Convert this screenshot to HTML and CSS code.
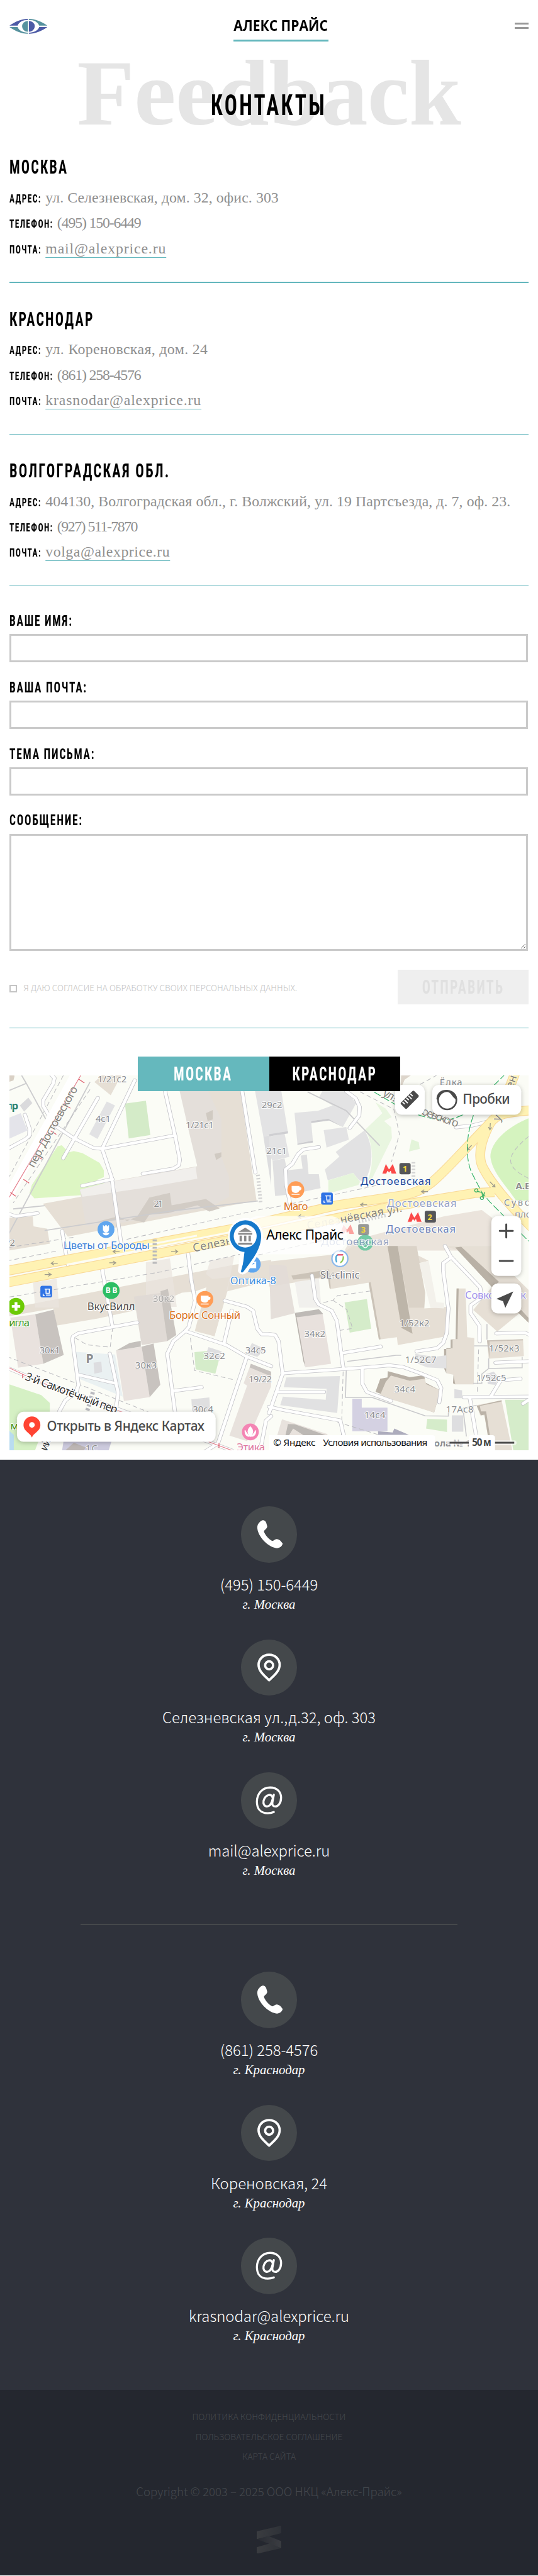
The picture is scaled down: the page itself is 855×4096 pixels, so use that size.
FILE: index.html
```
<!DOCTYPE html>
<html lang="ru">
<head>
<meta charset="utf-8">
<title>Алекс Прайс — Контакты</title>
<link rel="stylesheet" href="styles.css">
</head>
<body>
<header class="header">
  <svg class="header__logo" viewBox="0 0 81 32" aria-label="Алекс Прайс">
    <path d="M0 14.500C12 6 26 0 39.500 0V2.500C29 2.500 20 7 17.500 14.500Z" fill="#4d5ba6"/>
    <path d="M81 14.500C69 6 55 0 41.500 0V2.500C52 2.500 61 7 63.500 14.500Z" fill="#56929e"/>
    <path d="M0 17.500C12 26 26 32 39.500 32V29.500C29 29.500 20 25 17.500 17.500Z" fill="#56929e"/>
    <path d="M81 17.500C69 26 55 32 41.500 32V29.500C52 29.500 61 25 63.500 17.500Z" fill="#4d5ba6"/>
    <path d="M39.500 4.500V27.500A12.500 11.500 0 0 1 39.500 4.500Z" fill="#56929e"/>
    <path d="M41.500 4.500V27.500A12.500 11.500 0 0 0 41.500 4.500Z" fill="#4d5ba6"/>
  </svg>
  <a class="header__title"><span class="header__name">АЛЕКС ПРАЙС</span></a>
  <div class="header__menu"><i></i><i></i></div>
</header>

<main class="page">
  <div class="hero">
    <div class="hero__back">Feedback</div>
    <h1 class="hero__title"><span class="narrow">КОНТАКТЫ</span></h1>
  </div>

  <section class="office">
    <h2 class="office__city"><span class="narrow">МОСКВА</span></h2>
    <div class="row"><span class="row__label"><span class="narrow">АДРЕС:</span></span><span class="row__value">ул. Селезневская, дом. 32, офис. 303</span></div>
    <div class="row"><span class="row__label row__label--phone"><span class="narrow">ТЕЛЕФОН:</span></span><span class="row__value row__value--phone">(495) 150-6449</span></div>
    <div class="row"><span class="row__label"><span class="narrow">ПОЧТА:</span></span><a class="row__value row__value--mail">mail@alexprice.ru</a></div>
  </section>
  <section class="office">
    <h2 class="office__city"><span class="narrow">КРАСНОДАР</span></h2>
    <div class="row"><span class="row__label"><span class="narrow">АДРЕС:</span></span><span class="row__value row__value--short">ул. Кореновская, дом. 24</span></div>
    <div class="row"><span class="row__label row__label--phone"><span class="narrow">ТЕЛЕФОН:</span></span><span class="row__value row__value--phone">(861) 258-4576</span></div>
    <div class="row"><span class="row__label"><span class="narrow">ПОЧТА:</span></span><a class="row__value row__value--mail">krasnodar@alexprice.ru</a></div>
  </section>
  <section class="office">
    <h2 class="office__city"><span class="narrow narrow--long">ВОЛГОГРАДСКАЯ ОБЛ.</span></h2>
    <div class="row"><span class="row__label"><span class="narrow">АДРЕС:</span></span><span class="row__value">404130, Волгоградская обл., г. Волжский, ул. 19 Партсъезда, д. 7, оф. 23.</span></div>
    <div class="row"><span class="row__label row__label--phone"><span class="narrow">ТЕЛЕФОН:</span></span><span class="row__value row__value--phone2">(927) 511-7870</span></div>
    <div class="row"><span class="row__label"><span class="narrow">ПОЧТА:</span></span><a class="row__value row__value--mail2">volga@alexprice.ru</a></div>
  </section>

  <form class="form">
    <label class="field"><span class="field__label"><span class="narrow">ВАШЕ ИМЯ:</span></span><input class="field__input" type="text"></label>
    <label class="field"><span class="field__label"><span class="narrow">ВАША ПОЧТА:</span></span><input class="field__input" type="text"></label>
    <label class="field"><span class="field__label"><span class="narrow">ТЕМА ПИСЬМА:</span></span><input class="field__input" type="text"></label>
    <label class="field"><span class="field__label"><span class="narrow">СООБЩЕНИЕ:</span></span><textarea class="field__input field__input--area"></textarea></label>
    <div class="form__bottom">
      <label class="consent"><i class="consent__box"></i><span class="consent__text">Я ДАЮ СОГЛАСИЕ НА ОБРАБОТКУ СВОИХ ПЕРСОНАЛЬНЫХ ДАННЫХ.</span></label>
      <button class="submit" type="button"><span class="narrow">ОТПРАВИТЬ</span></button>
    </div>
  </form>

  <section class="places">
    <nav class="tabs">
      <a class="tabs__item tabs__item--active"><span class="narrow">МОСКВА</span></a>
      <a class="tabs__item"><span class="narrow">КРАСНОДАР</span></a>
    </nav>
    <svg class="map" viewBox="0 0 1108 800">
      <defs>
        <g id="lanes-nw" transform="matrix(.366 0 0 .3333 -20 -66)">
          <path d="M300 195L317 215L310 250L250 360V390L320 520L430 600L540 660L595 668L650 850L712 1320"/>
          <path d="M570 342L368 728"/><path d="M785 230L595 668"/><path d="M595 668L1020 582"/>
          <path d="M960 290L1020 582L1048 740L1040 775L1010 795L832 828"/>
          <path d="M145 450L172 540L170 585L150 605L50 665"/><path d="M655 862L478 905"/>
          <path d="M1410 290L1488 820"/><path d="M50 1085L90 1100L218 1080"/><path d="M362 1195L380 1320"/>
        </g>
        <g id="lanes-ne" transform="matrix(.366 0 0 .3333 554 -66)">
          <path d="M450 300L505 345L528 400L525 455L470 535"/>
          <path d="M290 657L200 672L170 700L135 765L95 800L100 900L135 1085"/>
          <path d="M1090 530L1180 520L1290 490"/>
        </g>
        <g id="lanes-sw" transform="matrix(.366 0 0 .3333 -20 364)">
          <path d="M595 150L655 515"/><path d="M380 20L395 120"/>
          <path d="M800 490L455 560L425 580L422 600L457 890L445 935L380 990L345 1060"/>
          <path d="M640 690L688 940L675 1050"/><path d="M455 825L665 878"/>
          <path d="M1095 40L1115 220L1137 350L1100 520L1075 550L1010 610L975 690L1020 1065"/>
          <path d="M1080 545L1320 635L1430 705L1580 770"/><path d="M1350 415L1305 625"/><path d="M1310 350L1440 390L1475 415L1500 530L1525 565H1580"/>
          <path d="M1437 715L1270 1265L1190 1320"/><path d="M1015 928L1175 905"/><path d="M1580 1090L1550 1120L1515 1320"/>
          <path d="M50 785L260 880L440 945L700 1050L1180 1240L1350 1310"/>
        </g>
        <g id="lanes-se" transform="matrix(.366 0 0 .3333 554 364)">
          <path d="M250 190L270 340L290 375L365 415L395 480L432 780"/>
          <path d="M0 565L35 570L55 610L78 810"/><path d="M430 685L650 645"/>
          <path d="M80 815L540 780L700 765L780 775L880 815L980 860L1003 910L992 1000"/>
          <path d="M543 780V880L570 935L710 992"/><path d="M80 815L0 1070"/><path d="M0 1030L80 1050L415 1118L440 1240"/>
          <path d="M50 935H320"/><path d="M1025 0L1060 70L1230 265L1240 330L1175 380V430L1225 510L1228 610"/>
          <path d="M1060 75L1015 110V160L1045 400L1035 560L1015 620L980 655L860 675"/>
          <path d="M1325 560L1490 555L1520 570"/><path d="M1320 748L1520 738"/><path d="M1465 850L1350 860L1295 960"/>
          <path d="M1135 968L1520 965"/><path d="M1170 975L1220 1300"/><path d="M1480 1010L1520 980"/>
        </g>
        <g id="avenue">
          <path d="M-10 418L490 325L700 277L840 256C900 246 920 210 1026 101C1040 82 1060 78 1120 74"/>
          <path d="M-10 443L554 335L810 281L993 251L1035 249"/>
          <path d="M1044 84L1081 -10"/>
          <path d="M1026 101C1000 150 1000 180 1012 200C1025 225 1060 270 1118 328"/>
        </g>
      </defs>
      <rect width="1108" height="800" fill="#fbfcf6"/>

      <g transform="matrix(.366 0 0 .3333 -20 -66)">
        <path d="M335 652L360 645L400 690L430 682L480 695L580 758L605 805V850L560 870L620 895L625 935L600 955L200 985L172 950L185 900Z" fill="#ddf6c3"/>
        <path d="M728 378L850 360L876 580L750 602Z" fill="#d4ebc8"/>
        <path d="M550 240L600 190H710L645 325Z" fill="#e6dfd5"/>
        <path d="M622 365L670 390L568 605L520 575Z" fill="#e2e2e4"/>
        <path d="M115 390L165 340L188 375L140 430Z" fill="#dadadc"/><path d="M50 470L120 440L160 550L50 605Z" fill="#e4e4ea"/>
        <path d="M50 190L85 200L78 230L50 240Z" fill="#d9d0c5"/>
        <path d="M1150 290H1400L1495 1000L395 1230L250 1020L470 975L680 870L1150 780L1075 290Z" fill="#e6dfd5"/>
        <path d="M465 930L640 880L1150 780L1110 600L1045 290H1210L1290 480L1290 720L1335 850V975L1230 1040L720 1140L500 1160Z" fill="#e4dfda"/>
        <path d="M465 930L640 880L1140 785L1150 860L830 920L480 975Z" fill="#f1efec"/>
        <path d="M870 980L990 950L1000 1030L1200 990L1280 1050L1220 1070L1150 1030L980 1080L870 1090L840 1140L760 1120L580 1130L690 1100L740 1130L800 1100Z" fill="#d2ccc5"/>
        <path d="M1200 440L1240 420V480L1210 490ZM1250 700L1290 690V720L1260 740Z" fill="#d0cac2"/>
        <path d="M1485 290L1580 290V580L1535 590Z" fill="#e3e3e4"/><path d="M1535 590L1580 580V900Z" fill="#dddddf"/>
        <path d="M50 1110L190 1100L195 1165L275 1180L290 1275L50 1320Z" fill="#e6dfd5"/>
      </g>
      <g transform="matrix(.366 0 0 .3333 554 -66)">
        <path d="M0 290H70L110 565L0 585ZM0 590L90 570L118 720L20 745L0 700Z" fill="#e3e3e4"/><path d="M0 575L110 555V570L0 588Z" fill="#cfcfd2"/>
        <path d="M148 438L285 425L370 390L290 340L310 300H445L508 375L430 528L345 475L245 490L255 615L165 635Z" fill="#e3e3e4"/>
        <path d="M165 635L255 615V628L165 642ZM245 490L345 475L430 528L350 487L245 503Z" fill="#cccccf"/>
        <path d="M318 548L450 528L465 610L335 660Z" fill="#e3e3e4"/>
        <path d="M555 550C600 620 620 760 555 880L525 870L490 822L342 870L325 800L410 718L388 688Z" fill="#e2e2e3"/>
        <path d="M20 745L90 730L105 805L195 795L185 712L220 705L230 830H290L300 920L125 960L35 970Z" fill="#e0e0e1"/>
        <path d="M345 870L490 822L530 880L520 900L375 945H345Z" fill="#e6f5db"/>
        <path d="M560 545L660 440L620 370L680 410L715 465L670 490L712 530L716 600L600 860L575 870C610 780 610 640 560 545Z" fill="#e9f6e0"/>
        <path d="M830 608L872 625L878 668L815 685Z" fill="#e3f4d9"/>
        <path d="M1520 470C1400 520 1290 620 1290 720C1300 820 1380 900 1440 1000L1520 1000Z" fill="#d5f3bf"/>
        <path d="M440 1320L470 1260L1020 1100L1240 1060L1300 1110V1320Z" fill="#ebe4dc"/>
        <path d="M770 195H830L790 225L765 290Z" fill="#ddd5cb"/>
      </g>
      <g transform="matrix(.366 0 0 .3333 -20 364)">
        <path d="M50 450L310 400L330 510L570 465L860 395L1060 300L1140 290L1240 250L1160 545L1250 578L1325 290L1580 220V90L1365 120L850 230L50 400Z" fill="#e6dfd5"/>
        <path d="M192 235L330 210L345 395H205ZM850 105L990 80L1030 390H850ZM1225 95L1365 65L1325 290L1200 180Z" fill="#e9e4de" opacity=".7"/>
        <path d="M1135 545L1215 215L1340 200L1250 578Z" fill="#e6dfd5"/>
        <path d="M60 460L205 437L252 755L105 780Z" fill="#e9e2de"/><path d="M205 437L312 408L371 698L252 755Z" fill="#c8c3bf"/>
        <path d="M780 325L945 300L975 610L825 635Z" fill="#e0dad5"/><path d="M935 290L978 275L1027 570L975 610Z" fill="#cac5c0"/>
        <path d="M676 670L825 645L872 968L722 993Z" fill="#e9e2de"/><path d="M825 645L895 625L934 890L872 968Z" fill="#c8c3bf"/><path d="M676 670L755 622L820 608V645Z" fill="#c4c0bc"/>
        <path d="M440 678L670 695L715 965L460 850Z" fill="#eaf1f2"/><path d="M545 748L590 742L595 808L550 818Z" fill="#dddde0"/>
        <path d="M1133 680L1210 672L1275 735L1255 818L1140 790Z" fill="#d5ecca"/><path d="M1215 648L1292 675L1280 735L1195 710Z" fill="#dedee0"/><path d="M1468 622L1545 660L1500 710L1440 690Z" fill="#e0e0e1"/>
        <path d="M1115 982L1220 970L1225 1060H1120Z" fill="#dfdfe0"/>
        <path d="M1462 755L1580 810V900L1440 1250L1337 1215L1440 895L1420 880Z" fill="#e8e2dd"/><path d="M1462 755L1580 805V835L1455 778Z" fill="#c8c3bf"/>
        <path d="M50 885L240 955L290 1005V1060L200 1320H50Z" fill="#d5f0c4"/><path d="M50 1180L80 1210V1320H50Z" fill="#b9dcf0"/>
        <path d="M370 1250H650L630 1320H360Z" fill="#cdcbde"/><path d="M380 1310L430 1260L500 1290L480 1320H380Z" fill="#bdb6b4"/>
      </g>
      <g transform="matrix(.366 0 0 .3333 554 364)">
        <path d="M0 100L420 50L490 0H760L930 95L875 110L905 400L1035 390L1025 580L750 635L745 585L640 600L580 235L360 275L345 200L0 260Z" fill="#e6dfd5"/>
        <path d="M0 120L100 125L150 430L10 470Z" fill="#e2dcd7" opacity=".9"/><path d="M150 230L290 210L305 395H175Z" fill="#f1f0ed"/>
        <path d="M690 0H750L836 562L772 525Z" fill="#bdb5a9"/><path d="M750 0H860L910 300L905 395H815Z" fill="#dbd3c8"/><path d="M580 235L640 600L650 597L592 232ZM130 190L350 150L360 275L352 270L343 200L140 215Z" fill="#cbc3b8"/>
        <path d="M875 110L930 95L975 360L1020 365V400L940 395Z" fill="#f3f1eb"/>
        <path d="M1030 0H1300V50L1520 290V490L1460 430L1330 548L1190 410L1300 260L1100 30Z" fill="#e6dfd5"/>
        <path d="M1085 10L1120 5L1340 230L1300 265ZM1450 425L1470 410L1520 470V500Z" fill="#b9b1a6"/>
        <path d="M1093 272H1145L1155 585L1196 590L1193 887H1082L1075 825L1033 815V660L1070 655V600L1088 597Z" fill="#e6dfd5"/><path d="M1093 272H1105L1098 597H1070V655H1033V815L1020 785V660H1058V600L1087 597ZM1075 825L1085 887L1072 880Z" fill="#b9b1a6"/>
        <path d="M150 428L165 440L212 778L200 740Z" fill="#b8b3ad"/><path d="M160 455L312 435L361 755L212 778Z" fill="#e8e1dd"/><path d="M152 428L290 405L315 435L165 457Z" fill="#bebab6"/>
        <path d="M440 362L570 340L595 530L470 555Z" fill="#d5ecca"/>
        <path d="M100 842L413 833L397 1070L65 1020L80 965L330 985L335 915L85 905Z" fill="#e1e1e2"/>
        <path d="M692 802L820 840L905 828L910 875L998 925L962 1067L620 935L648 850L690 842Z" fill="#b9b1a6"/><path d="M710 830L820 863L908 850L915 885L998 925L962 1067L645 960L680 870Z" fill="#e6dfd5"/>
        <path d="M485 978H540V1036H690V1187H485Z" fill="#d4d1e2"/><path d="M635 1187L720 1195L730 1170L815 1210H635Z" fill="#adacbd"/>
        <path d="M850 690L960 710L1033 700V785L920 778L870 755Z" fill="#e2e2e3"/>
        <path d="M1270 605L1480 598L1485 705L1280 722Z" fill="#e6dfd5"/><path d="M1270 605L1480 598V605L1285 612V722Z" fill="#c8c0b6"/>
        <path d="M1265 820L1310 805L1335 840L1320 890L1275 885Z" fill="#dcdce0"/><path d="M1080 917L1125 925V975H1080ZM1065 1085H1132V1190H1065Z" fill="#dedee0"/>
        <path d="M922 1107L1037 1112V1192L915 1170Z" fill="#d5ecca"/><path d="M1375 985H1520V1320H1425Z" fill="#d5ecca"/>
        <path d="M1210 1020L1355 988L1420 1320H1290L1255 1085H1230Z" fill="#e6dfd5"/><path d="M1210 1025L1235 1085L1255 1080L1290 1310L1300 1305L1265 1060L1235 1060L1228 1025L1355 996V988Z" fill="#bbb3a8"/>
        <path d="M75 1110L340 1205V1240H40Z" fill="#e8e2dd"/><path d="M110 1140L150 1142L330 1212H200L140 1170L115 1215H95Z" fill="#bcb8b4"/>
        <path d="M450 790L445 970L600 970L910 1088L1045 1090V1060M455 740L740 700L770 700M1270 500V600M1275 640H1195M1475 710V780L1280 785V720M1280 785L1240 820V880H1190M1130 1040L1150 1220M1130 1040L1210 1020" class="wall"/>
      </g>
      <g class="walls">
        <path d="M-5 34L36 17L26 0M36 17L80 98M172 14L-5 345M132 0L-5 250M8 285L75 278M75 331L340 290L530 268M636 35L718 75L790 150"/>
      </g>
      <g class="dashes">
        <path d="M115 0L-5 225M172 30L8 272M-5 396L100 375M0 473L320 420L500 380M0 367L140 345M250 350L554 282M554 284L760 240L850 220M748 35L820 72L832 125L815 185M500 390L700 345M820 50L920 -5M1108 130C1060 170 1060 190 1090 210L1108 220M-5 600L20 610L150 660L300 720L420 770M700 740L830 780M140 560L165 575L215 580L220 540M1001 585L998 680M708 770L712 630M386 560L395 630L480 650"/>
        <path d="M670 485L690 480L700 470L770 460M690 480L720 500L732 540L700 545"/>
      </g>

      <g class="casing"><use href="#lanes-nw"/><use href="#lanes-ne"/><use href="#lanes-sw"/><use href="#lanes-se"/></g>
      <g class="lane"><use href="#lanes-nw"/><use href="#lanes-ne"/><use href="#lanes-sw"/><use href="#lanes-se"/></g>
      <path class="tram-bed" d="M143 -5L-5 262"/>
      <path class="tram" d="M155 -5L-5 268M-5 622L50 648L130 680L250 722"/>
      <path class="tram" d="M425 782L500 810"/>
      <path d="M148 8l12 8M118 62l12 8M88 118l12 8M57 171l12 8M30 222l12 8M2 250l12 8M28 638v8M447 785v10" stroke="#dd5566" stroke-width="1.600"/>
      <use href="#avenue" class="avenue-edge"/><use href="#avenue" class="avenue-fill"/>
      <path d="M250 370L400 342M122 404L470 335" stroke="#fdfcf4" stroke-width="4"/>
      <path d="M310 350v55" stroke="#b9b9bb" stroke-width="9" stroke-dasharray="4 4"/>
      <path d="M178 676l-12 40" stroke="#b9b9bf" stroke-width="9" stroke-dasharray="5 4"/>
      <path d="M530 212l6 60M862 185v50M745 312l60 -14" stroke="#d3d3d3" stroke-width="8" stroke-dasharray="3 4"/>
      <g class="arrow">
        <path d="M103 401h-14m6 -4l-6 4 6 4M235 376h-14m6 -4l-6 4 6 4M213 400h14m-6 -4l6 4 -6 4M75 425h14m-6 -4l6 4 -6 4M345 376h14m-6 -4l6 4 -6 4M763 276h-14m6 -4l-6 4 6 4M630 301h-14m6 -4l-6 4 6 4M893 248h-14m6 -4l-6 4 6 4M986 149l-9 10m1 -6l-1 6 6 -1M1026 102l-1 14m-3 -6l3 6 4 -5M1025 227l11 11m-6 -1l6 1 -1 -6"/>
      </g>
      <path class="metro-line" d="M760 25L820 60C880 92 950 120 1000 55L1060 -5M990 85C970 140 975 190 990 215L1008 250L1025 270L1108 354"/>

      <g class="road-name">
        <text transform="translate(52 198) rotate(-61)" textLength="194">пер. Достоевского</text>
        <text transform="translate(393 377) rotate(-12)" textLength="86">Селезн</text>
        <text transform="translate(707 316) rotate(-11)" textLength="134">нёвская ул.</text>
        <text transform="translate(636 329) rotate(-10)" textLength="72" opacity=".3">Селез</text>
        <text transform="translate(795 42) rotate(30)" textLength="30">ул.</text>
        <text transform="translate(878 83) rotate(20)" textLength="82">оевского</text>
        <text transform="translate(1045 99) rotate(-67)" textLength="22">у</text>
        <text transform="translate(1074 29) rotate(-72)" textLength="28">ен</text>
        <text class="dark" transform="translate(32 649) rotate(20.500)" textLength="213">3-й Самотёчный пер.</text>
        <text class="dark" transform="translate(80 803) rotate(-70)" textLength="26">ий</text>
      </g>
      <g class="house">
        <text x="188" y="15" textLength="62">1/21с2</text><text x="184" y="100" textLength="32">4с1</text><text x="376" y="113" textLength="60">1/21с1</text><text x="308" y="280" textLength="20">21</text><text x="538" y="70" textLength="44">29с2</text><text x="548" y="168" textLength="44">21с1</text><text x="-8" y="364" textLength="20">72</text>
        <text x="64" y="593" textLength="44">30к1</text><text x="306" y="483" textLength="46" opacity=".6">30к2</text><text x="268" y="625" textLength="46">30к3</text><text x="414" y="605" textLength="46">32с2</text><text x="503" y="593" textLength="44">34с5</text><text x="510" y="655" textLength="50">19/22</text><text x="391" y="720" textLength="44">30с4</text>
        <text x="629" y="559" textLength="45">34к2</text><text x="832" y="535" textLength="64">1/52к2</text><text x="844" y="613" textLength="67">1/52С7</text><text x="1023" y="589" textLength="65">1/52к3</text><text x="996" y="653" textLength="64">1/52с5</text><text x="821" y="677" textLength="45">34с4</text><text x="757" y="732" textLength="45">14с4</text><text x="931" y="719" textLength="59">17Ас8</text><text x="673" y="434" textLength="40" opacity=".4">34к3</text>
        <text x="162" y="803" textLength="26">1С</text><text x="163" y="614" font-size="26" font-weight="700">P</text>
        <text x="918" y="22" textLength="48">Ёлка</text><text x="1080" y="243" font-weight="700">А.В</text><text x="1055" y="278" textLength="56">Суво</text><text x="1078" y="304">пло</text><text x="906" y="792" font-weight="700" textLength="78">ола № 1</text>
      </g>
      <g class="poi">
        <circle cx="206" cy="329" r="18" fill="#5fa6ef"/><path d="M200 320v9a6 6 0 0 0 12 0v-9l-3 3 -3 -4 -3 4zM206 335v6m-7 -5q2 5 7 5q5 0 7 -5" fill="#fff" stroke="#fff"/>
        <circle cx="217" cy="459" r="18" fill="#2dbe64"/><text x="205" y="465" fill="#fff" font-size="16" font-weight="700" textLength="25" stroke="none">ВВ</text>
        <circle cx="14" cy="493" r="18" fill="#6dca05"/><path d="M14 484v18M5 493h18" stroke="#fff" stroke-width="6"/>
        <circle cx="417" cy="478" r="18" fill="#ff9d56"/><circle cx="611" cy="244" r="18" fill="#ff9d56"/>
        <path id="cup" d="M409 471h15v7q-1 6 -7 6q-8 0 -8 -6zM424 473q5 0 4 3t-5 3M408 488h17" fill="#fff" stroke="#fff" stroke-width="1.800"/><use href="#cup" x="194" y="-234"/>
        <circle cx="518" cy="403" r="18" fill="#5fa6ef"/><path d="M511 397h16v15h-16zM515 400q4 6 8 0" fill="#fff" stroke="#5fa6ef"/>
        <circle cx="514" cy="761" r="18" fill="#f485b4"/><path d="M514 751q9 9 0 19q-9 -10 0 -19zM503 758q0 12 9 12M525 758q0 12 -9 12" fill="#fff" stroke="#fff" stroke-width="3"/>
        <circle cx="705" cy="391" r="17" fill="#fff" stroke="#8ab8ec" stroke-width="3"/><path d="M698 399q-4 -14 3 -16" stroke="#48a5d5" stroke-width="3" fill="none"/><path d="M700 383q9 0 12 0" stroke="#e04864" stroke-width="3"/><path d="M706 400q8 -6 6 -14" stroke="#8cc552" stroke-width="3" fill="none"/>
        <circle cx="759" cy="357" r="17" fill="#74c9a5"/><path d="M752 350l7 4 7 -4v10q-2 7 -7 8q-5 -1 -7 -8z" fill="none" stroke="#fff" stroke-width="2"/>
        <rect x="665" y="250" width="25" height="26" rx="4" fill="#2f73e5"/><rect x="66" y="449" width="25" height="25" rx="4" fill="#2f73e5"/>
        <path id="bus" d="M674 257h12M677 258v8h7v-8M671 267v4h3M677 270h10" stroke="#fff" stroke-width="2" fill="none"/><use href="#bus" x="-599" y="199"/>
        <path id="metro" d="M795 210L803 188L810 200L818 188L826 210H815L813 204L810 208L807 204L804 210Z" fill="#fb4b49" stroke="#fff" stroke-width="1"/><use href="#metro" x="54" y="103"/><use href="#metro" x="-90" y="129" opacity=".5"/>
        <g class="exit"><rect x="832" y="187" width="24" height="24" rx="4"/><rect x="886" y="289" width="24" height="25" rx="4"/><rect x="744" y="317" width="23" height="24" rx="4" opacity=".6"/><text x="839" y="206">1</text><text x="892" y="309">2</text><text x="750" y="336">3</text></g>
        <text x="115" y="371" textLength="184" fill="#3c83d8">Цветы от Бороды</text>
        <text x="166" y="501" textLength="102" fill="#494949">ВкусВилл</text>
        <text x="-1" y="535" textLength="44" fill="#479410">игла</text><text x="2" y="756" fill="#479410">м</text>
        <text x="341" y="519" textLength="152" fill="#d97120">Борис Сонный</text><text x="585" y="287" textLength="52" fill="#d97120">Маго</text>
        <text x="471" y="446" textLength="98" fill="#3c8de0">Оптика-8</text><text x="485" y="802" textLength="60" fill="#dd779c">Этика</text>
        <text x="663" y="433" textLength="84" fill="#77787e">SL-clinic</text><text x="-1" y="73" textLength="20" fill="#29816e" font-weight="700">тр</text>
        <text x="749" y="233" textLength="150" fill="#204a9d">Достоевская</text><text x="805" y="281" textLength="149" fill="#93a1c7">Достоевская</text><text x="803" y="335" textLength="149" fill="#6d83b7">Достоевская</text><text x="665" y="362" textLength="145" fill="#6d83b7" opacity=".65">Достоевская</text>
        <text x="972" y="476" textLength="130" fill="#a294ea">Совкомбанк</text>
        <path d="M996 242a3.500 3.500 0 1 0 .1 0M1008 258a3.500 3.500 0 1 0 .1 0M997 247l11 3 2 11 4 -12" fill="none" stroke="#3bb167" stroke-width="1.800"/>
      </g>

      <rect x="496" y="300" width="224" height="82" rx="38" fill="#fff" opacity=".72"/>
      <path d="M503 309A34 34 0 0 1 537 343C537 369 521 390 505 416Q497 424 492 417L497 376A34 34 0 0 1 503 309Z" fill="#1579cb" stroke="#fff" stroke-width="9" stroke-linejoin="round"/>
      <path d="M503 309A34 34 0 0 1 537 343C537 369 521 390 500 418Q495 424 494 418L505 377A34 34 0 0 1 503 309Z" fill="#1579cb"/>
      <circle cx="503" cy="343" r="24.500" fill="#fff"/>
      <path d="M503 325l14 9h-28zM488 336h30v4h-30zM491 342h5v12h-5zM500.500 342h5v12h-5zM510 342h5v12h-5zM488 357h30v4h-30z" fill="#8a8a8a"/>
      <text class="place" x="548" y="351" textLength="165">Алекс Прайс</text>

      <g class="control">
        <rect x="823" y="20" width="63" height="64" rx="14"/><rect x="902" y="20" width="190" height="64" rx="14"/>
        <rect x="1028" y="300" width="64" height="128" rx="14"/><rect x="1028" y="444" width="64" height="64" rx="14"/>
        <rect x="16" y="718" width="424" height="64" rx="14"/>
      </g>
      <g transform="rotate(-45 854 52)"><rect x="834" y="43" width="40" height="18" rx="3" fill="#4a4a4a"/><path d="M840 44v7M846 44v10M852 44v7M858 44v10M864 44v7" stroke="#fff" stroke-width="2.500"/></g>
      <circle cx="934" cy="53" r="19.500" fill="#fff" stroke="#4a4a4a" stroke-width="3.500"/><path d="M911 50C912 36 922 30 934 31C948 32 956 42 955 53C950 50 946 46 942 40C936 32 926 34 920 40C915 45 914 52 915 56Z" fill="#4a4a4a"/>
      <text class="ui" x="967" y="61" textLength="101">Пробки</text>
      <path d="M1046 332h28M1060 318v28M1046 396h28" stroke="#4a4a4a" stroke-width="4" stroke-linecap="round"/>
      <path d="M1075 461L1058 496L1053 482L1039 477Z" fill="#4a4a4a"/>
      <path d="M48 728A18 18 0 0 1 66 746C66 760 52 762 48 773C44 762 30 760 30 746A18 18 0 0 1 48 728Z" fill="#ff4433"/><circle cx="48" cy="746" r="6" fill="#fff"/>
      <text class="ui" x="80" y="759" textLength="336">Открыть в Яндекс Картах</text>
      <path d="M554 800V768H902Q908 768 908 774V800Z" fill="#fff"/>
      <text class="copy" x="563" y="791" textLength="90">© Яндекс</text><text class="copy" x="669" y="791" textLength="223">Условия использования</text>
      <path d="M938 784h139" stroke="#fff" stroke-width="10" stroke-linecap="round" opacity=".6"/>
      <path d="M980 800V774Q980 768 986 768H1030Q1036 768 1036 774V800Z" fill="#fff"/>
      <path d="M939 784h41M1036 784h41" stroke="#4a4a4a" stroke-width="4"/>
      <text class="copy copy--bold" x="987" y="791" textLength="41">50 м</text>
    </svg>
  </section>
</main>

<section class="contacts">
  <div class="contacts__group">
    <div class="contact"><div class="contact__icon"><svg viewBox="0 0 120 120"><path class="icon-fill" d="M42 32C47 28 52 30 54 36L56 43C56 48 49 51 49 54C51 61 59 70 66 74C69 75 72 70 76 70C82 70 86 75 89 80C87 87 80 91 73 89C56 85 37 65 35 48C34 41 37 36 42 32Z"/></svg></div><div class="contact__text">(495) 150-6449</div><div class="contact__city">г. Москва</div></div>
    <div class="contact"><div class="contact__icon"><svg viewBox="0 0 120 120"><path class="icon-line" d="M60 32.500C46 32.500 37.500 43 37.500 54C37.500 68 51 78 60 87C69 78 82.500 68 82.500 54C82.500 43 74 32.500 60 32.500Z"/><circle class="icon-line" cx="60" cy="55" r="8.500"/></svg></div><div class="contact__text">Селезневская ул.,д.32, оф. 303</div><div class="contact__city">г. Москва</div></div>
    <div class="contact"><div class="contact__icon"><svg viewBox="0 0 120 120"><path class="icon-line icon-line--at" d="M70 85Q64 87.500 57 87.500C42 87.500 34 78 34 63C34 45 46 32.500 62 32.500C77 32.500 85.500 42 85.500 54C85.500 66 79 73 73 73C68 73 66 70 67 64L70 48M68 56C67 50 63 47 58 49C51 51 47 60 48 66C50 75 58 74 62 70Q66 65 68 56"/></svg></div><div class="contact__text">mail@alexprice.ru</div><div class="contact__city">г. Москва</div></div>
  </div>
  <div class="contacts__line"></div>
  <div class="contacts__group">
    <div class="contact"><div class="contact__icon"><svg viewBox="0 0 120 120"><path class="icon-fill" d="M42 32C47 28 52 30 54 36L56 43C56 48 49 51 49 54C51 61 59 70 66 74C69 75 72 70 76 70C82 70 86 75 89 80C87 87 80 91 73 89C56 85 37 65 35 48C34 41 37 36 42 32Z"/></svg></div><div class="contact__text">(861) 258-4576</div><div class="contact__city">г. Краснодар</div></div>
    <div class="contact"><div class="contact__icon"><svg viewBox="0 0 120 120"><path class="icon-line" d="M60 32.500C46 32.500 37.500 43 37.500 54C37.500 68 51 78 60 87C69 78 82.500 68 82.500 54C82.500 43 74 32.500 60 32.500Z"/><circle class="icon-line" cx="60" cy="55" r="8.500"/></svg></div><div class="contact__text">Кореновская, 24</div><div class="contact__city">г. Краснодар</div></div>
    <div class="contact"><div class="contact__icon"><svg viewBox="0 0 120 120"><path class="icon-line icon-line--at" d="M70 85Q64 87.500 57 87.500C42 87.500 34 78 34 63C34 45 46 32.500 62 32.500C77 32.500 85.500 42 85.500 54C85.500 66 79 73 73 73C68 73 66 70 67 64L70 48M68 56C67 50 63 47 58 49C51 51 47 60 48 66C50 75 58 74 62 70Q66 65 68 56"/></svg></div><div class="contact__text">krasnodar@alexprice.ru</div><div class="contact__city">г. Краснодар</div></div>
  </div>
</section>

<footer class="footer">
  <a class="footer__link">ПОЛИТИКА КОНФИДЕНЦИАЛЬНОСТИ</a>
  <a class="footer__link">ПОЛЬЗОВАТЕЛЬСКОЕ СОГЛАШЕНИЕ</a>
  <a class="footer__link">КАРТА САЙТА</a>
  <p class="footer__copy">Copyright © 2003 – 2025 ООО НКЦ «Алекс-Прайс»</p>
  <svg class="footer__logo" viewBox="0 0 52 60">
    <defs><linearGradient id="band"><stop offset="0" stop-color="#3a3c40"/><stop offset="1" stop-color="#2f3238"/></linearGradient><linearGradient id="band2"><stop offset="0" stop-color="#272a31"/><stop offset="1" stop-color="#3b3d42"/></linearGradient></defs>
    <path d="M0 12L52 0V16L0 29Z" fill="url(#band)"/><path d="M0 29L25 22L52 33V48Z" fill="url(#band2)"/><path d="M0 46L28 38L52 48L0 60Z" fill="url(#band)"/>
  </svg>
</footer>
</body>
</html>
```
FILE: styles.css
```
/* 1rem is ten design pixels of the 1148px layout */
html { font-size: 7.449px; }
* { box-sizing: border-box; }
body { margin: 0; background: #fff; color: #000; font-family: Roboto, sans-serif; }
h1, h2, p { margin: 0; font-weight: inherit; }
svg { display: block; }

.narrow { display: inline-block; font-family: Roboto, sans-serif; font-weight: 700; font-stretch: 75%; letter-spacing: .1em; transform: scaleX(.71); transform-origin: 0 50%; white-space: nowrap; }
.narrow--long { transform: scaleX(.726); }

.header { display: flex; justify-content: space-between; align-items: flex-start; padding: 4rem 2rem 0; }
.header__logo { width: 8.1rem; height: 3.2rem; }
.header__title { display: flex; flex-direction: column; align-items: center; gap: 1.4rem; width: 20.2rem; white-space: nowrap; font: 700 3rem/3rem "Open Sans", sans-serif; }
.header__title::after { content: ""; width: 20.2rem; height: .4rem; background: #64b7bd; }
.header__name { transform: scaleX(.945); }
.header__menu { display: grid; gap: .6rem; margin-top: .8rem; width: 3rem; }
.header__menu i { height: .4rem; background: #999; }

.page { padding: 0 2rem 2rem; }

.hero { display: grid; justify-items: center; align-items: start; height: 24.8rem; }
.hero > * { grid-area: 1 / 1; }
.hero__back { margin-top: .95rem; font: 700 20rem/20rem "Liberation Serif", serif; letter-spacing: -.04rem; color: #e5e5e5; }
.hero__title { margin-top: 10.6rem; font-size: 6.2rem; line-height: 6.2rem; }
.hero__title .narrow, .submit .narrow, .tabs .narrow { transform-origin: 50% 50%; }
.hero__title .narrow { transform: scaleX(.725); }

.office { margin-bottom: 5.6rem; }
.office::after, .form::after { content: ""; display: block; height: .2rem; background: #64b7bd; }
.office::after { margin-top: 4.5rem; }
.office__city { height: 4.2rem; margin-bottom: 1.7rem; font-size: 4.15rem; line-height: 4.2rem; }
.row { display: flex; align-items: baseline; height: 5.4rem; line-height: 5.4rem; }
.row__label { flex: none; width: 7.7rem; font-size: 2.56rem; }
.row__label--phone { width: 10.2rem; }
.row__value { font-family: "Liberation Serif", serif; font-size: 3.2rem; color: #8f8f8f; letter-spacing: .01rem; white-space: nowrap; }
.row__value--short { letter-spacing: .05rem; }
.row__value--phone { letter-spacing: -.155rem; }
.row__value--phone2 { letter-spacing: -.2rem; }
.row__value--mail { letter-spacing: .115rem; }
.row__value--mail2 { letter-spacing: .075rem; }
a.row__value { text-decoration: underline .2rem #64b7bd; text-underline-offset: .8rem; text-decoration-skip-ink: none; }

.field { display: block; margin-bottom: 3.6rem; }
.field__label { display: block; height: 3.4rem; margin-bottom: 1.2rem; font-size: 3.3rem; line-height: 3.4rem; }
.field__input { display: block; width: 110.6rem; height: 6rem; margin: 0; padding: 0; border: 3px solid #cacaca; border-radius: 0; background: #fff; outline: 0; }
.field__input--area { height: 25rem; resize: both; }
.form__bottom { display: flex; justify-content: space-between; align-items: flex-start; margin: 4rem 0 5rem; }
.consent { display: flex; align-items: flex-start; gap: 1.4rem; padding-top: 2.9rem; font: 300 1.84rem/2rem "Noto Sans CJK SC", sans-serif; color: #c4c4c4; }
.consent__box { width: 1.6rem; height: 1.6rem; margin-top: .4rem; border: 2px solid #c4c4c4; }
.submit { width: 28rem; height: 7.4rem; padding: 0; border: 0; background: #efefef; color: #e0e0e0; font: 4.15rem/7.4rem Roboto, sans-serif; }

.places { padding-top: 6rem; }
.tabs { position: relative; z-index: 1; display: flex; justify-content: center; margin-bottom: -3.4rem; }
.tabs__item { width: 28rem; height: 7.4rem; background: #000; color: #fff; font-size: 4.15rem; line-height: 7.4rem; text-align: center; }
.tabs__item .narrow { margin: 0 -3rem; }
.tabs__item--active { background: #65b8bd; }

.map { width: 110.8rem; height: 80rem; overflow: hidden; font-family: "Noto Sans", sans-serif; fill: none; }
.map text { stroke-linejoin: round; paint-order: stroke; }
.casing, .lane { fill: none; stroke-linecap: round; stroke-linejoin: round; }
.casing { stroke: #c3c3c8; stroke-width: 24; }
.lane { stroke: #fff; stroke-width: 18; }
.wall { stroke: #c9c9cc; stroke-width: 6; }
.walls { stroke: #ccccce; stroke-width: 2.5; }
.dashes { stroke: #bcbcc0; stroke-width: 1.4; stroke-dasharray: 10 6; }
.avenue-edge { stroke: #f9d998; stroke-width: 21; }
.avenue-fill { stroke: #fff2b3; stroke-width: 18; }
.tram-bed { stroke: #fff; stroke-width: 20; }
.tram { stroke: #e5808d; stroke-width: 1.6; }
.arrow { stroke: #9f9b8c; stroke-width: 1.8; }
.metro-line { stroke: #35b36a; stroke-width: 1.6; stroke-dasharray: 16 5; }
.road-name { fill: #85837c; font-size: 24px; }
.road-name text { stroke: #fff; stroke-opacity: .6; stroke-width: 2; }
.road-name .dark { fill: #333; stroke-opacity: 1; stroke-width: 4; }
.house { fill: #8b8d8f; font-size: 20px; }
.house text { stroke: #fff; stroke-opacity: .8; stroke-width: 3; }
.poi { font-size: 22.5px; }
.poi > text { stroke: #fff; stroke-width: 3; }
.poi > text[stroke="none"] { stroke: none; }
.exit { fill: #555659; font-size: 17px; font-weight: 700; }
.exit text { fill: #f5d838; }
.place { font-size: 28px; fill: #000; }
.control { fill: #fff; filter: drop-shadow(0 2px 5px rgba(0, 0, 0, .25)); }
.ui { font-size: 28px; font-weight: 500; fill: #4a4a4a; }
.copy { font-size: 20.5px; fill: #111; }
.copy--bold { font-weight: 700; fill: #444; }

.contacts { padding: 10rem 0 10.05rem; background: #2f323b; color: #fff; text-align: center; }
.contacts__group { display: grid; gap: 6.05rem; }
.contacts__line { width: 80.4rem; height: .2rem; margin: 10.05rem auto 10rem; background: #45484b; }
.contact__icon { width: 12rem; height: 12rem; margin: 0 auto 2.6rem; border-radius: 50%; background: #44484b; }
.contact__text { height: 4rem; margin-bottom: .95rem; font: 300 3.2rem/4rem "Noto Sans CJK SC", sans-serif; }
.contact__city { height: 2.8rem; font: italic 2.8rem/2.8rem "Liberation Serif", serif; }
.icon-fill { fill: #fff; }
.icon-line { fill: none; stroke: #fff; stroke-width: 5; stroke-linejoin: round; stroke-linecap: round; }
.icon-line--at { stroke-width: 4.5; }

.footer { display: flex; flex-direction: column; align-items: center; padding: 3.7rem 0 4.6rem; background: #24272f; color: #44474d; font-family: "Noto Sans CJK SC", sans-serif; font-weight: 300; }
.footer__link { font-size: 1.85rem; line-height: 4.2rem; }
.footer__copy { margin: 3.4rem 0 5.3rem; font-size: 2.5rem; line-height: 4rem; }
.footer__logo { width: 5.2rem; height: 6rem; }
```
